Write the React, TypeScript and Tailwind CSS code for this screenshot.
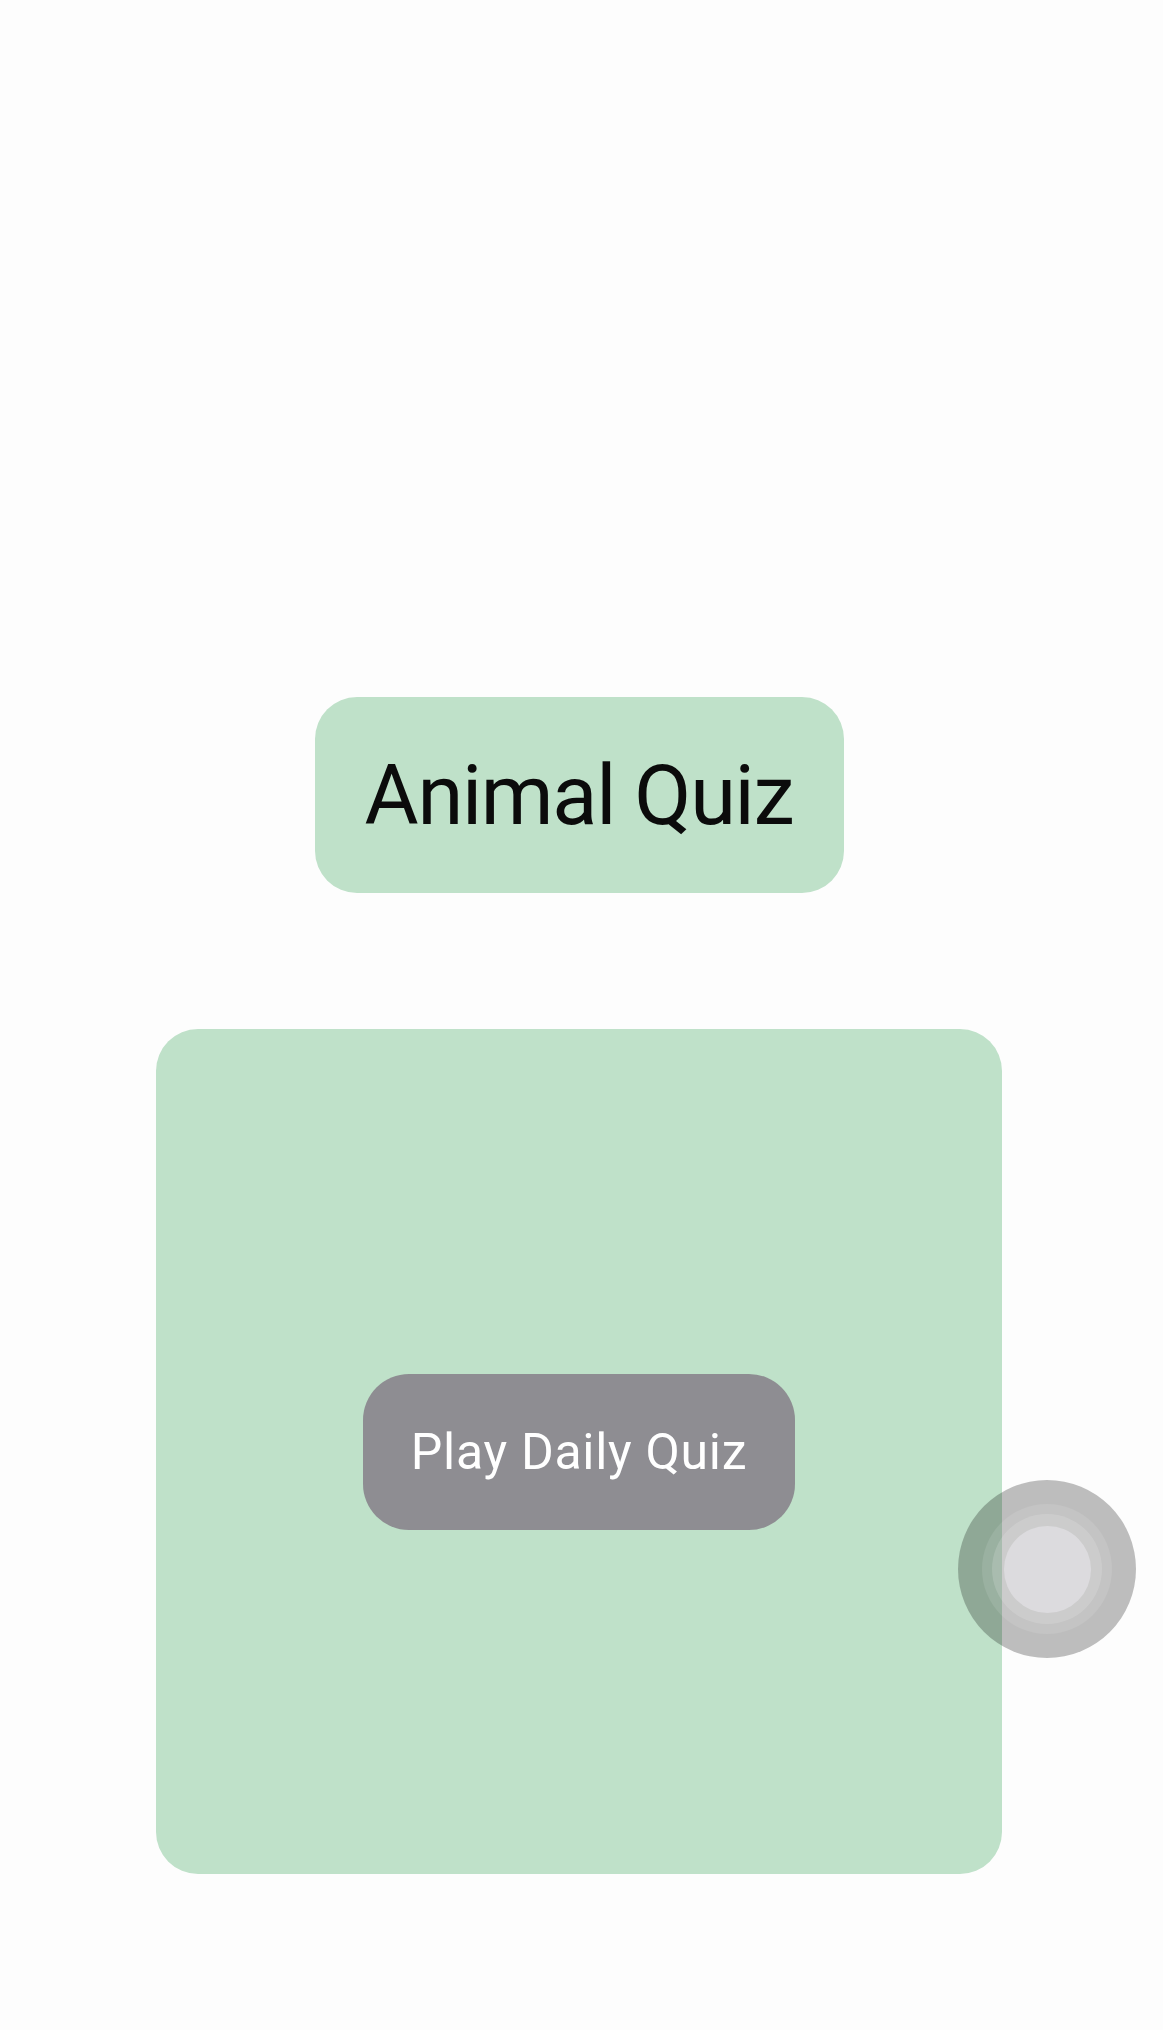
export default function App() {
  return (
    <div className="relative w-full min-h-[2030px] bg-[#fdfdfd] font-['Roboto',sans-serif]">
      <div className="flex flex-col items-center pt-[697px] pr-[5px]">
        <div className="w-[529px] h-[196px] rounded-[42px] bg-[#bfe1c9] flex items-center justify-center">
          <span className="text-[83px] leading-none tracking-[-1.3px] text-[#0b0b0b]">Animal Quiz</span>
        </div>
        <div className="mt-[136px] w-[846px] h-[845px] rounded-[42px] bg-[#bfe1c9] flex items-center justify-center">
          <button className="w-[432px] h-[156px] rounded-[46px] bg-[#8e8d92] text-white text-[50px] leading-none tracking-[0.7px]">
            Play Daily Quiz
          </button>
        </div>
      </div>

      {/* floating assistive touch button */}
      <div className="absolute left-[958px] top-[1480px] w-[178px] h-[178px] rounded-full bg-black/25 flex items-center justify-center">
        <div className="w-[130px] h-[130px] rounded-full bg-white/10 flex items-center justify-center">
          <div className="w-[110px] h-[110px] rounded-full bg-white/15 flex items-center justify-center">
            <div className="w-[87px] h-[87px] rounded-full bg-[#dcdbde]" />
          </div>
        </div>
      </div>
    </div>
  );
}
